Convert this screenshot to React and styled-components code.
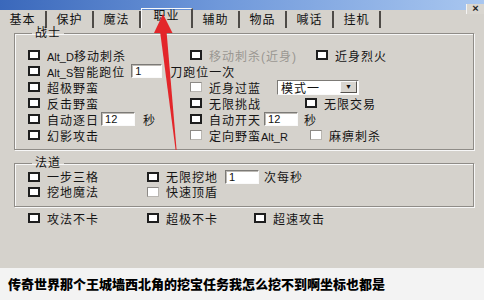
import React from 'react';
import styled, { createGlobalStyle } from 'styled-components';

const GlobalStyle = createGlobalStyle`
  html, body {
    margin: 0;
    padding: 0;
    width: 484px;
    height: 300px;
    overflow: hidden;
    background: #f4f4f4;
  }
`;

const Page = styled.div`
  position: relative;
  width: 484px;
  height: 300px;
  display: flex;
  flex-direction: column;
  font-family: "Liberation Sans", "Noto Sans CJK SC", sans-serif;
`;

const Window = styled.div`
  height: 268px;
  display: flex;
  flex-direction: column;
  background: #d5d2cc;
`;

const TitleBar = styled.div`
  height: 10px;
  display: flex;
  justify-content: flex-end;
  align-items: flex-end;
  background: linear-gradient(90deg, #3a68bb 0%, #6f98da 45%, #a9c7f0 100%);
`;

const CloseButton = styled.div`
  width: 17px;
  height: 10px;
  margin-bottom: -4px;
  background: #d9d6d0;
  border-left: 1px solid #f4f4f4;
  font: bold 11px/9px "Liberation Sans", sans-serif;
  color: #222;
  text-align: center;
`;

const TabStrip = styled.div`
  height: 18px;
  display: flex;
  align-items: flex-end;
`;

const Tab = styled.div`
  box-sizing: border-box;
  width: ${p => (p.$active ? 52 : 47)}px;
  height: ${p => (p.$active ? 20 : 17)}px;
  border-right: 2px solid #4e4b47;
  border-left: ${p => (p.$active ? '1px solid #fafafa' : 'none')};
  border-top: ${p => (p.$active ? '1px solid #fafafa' : 'none')};
  padding-top: ${p => (p.$active ? 0 : 2)}px;
  text-align: center;
  font-size: 12px;
  letter-spacing: 1px;
  line-height: 14px;
  color: #111;
`;

const Panel = styled.div`
  flex: 1;
  display: flex;
  flex-direction: column;
  padding: 0 10px 0 14px;
`;

const Group = styled.fieldset`
  margin: ${p => p.$top}px 0 0 0;
  padding: ${p => p.$pad};
  border: 1px solid #8f8c87;
  box-shadow: inset 1px 1px 0 #f7f7f7, 1px 1px 0 #f7f7f7;
  min-width: 0;
`;

const Legend = styled.legend`
  margin-left: 4px;
  padding: 0 3px;
  font-size: 12px;
  line-height: 10px;
  letter-spacing: 1px;
  color: #111;
`;

const Row = styled.div`
  height: ${p => p.$h || 16}px;
  display: flex;
  align-items: center;
  padding-left: ${p => p.$indent || 0}px;
  margin-top: ${p => p.$mt || 0}px;
`;

const Cell = styled.div`
  display: flex;
  align-items: center;
  flex: none;
  width: ${p => (p.$w ? `${p.$w}px` : 'auto')};
`;

const Check = styled.span`
  box-sizing: border-box;
  flex: none;
  width: 12px;
  height: 10px;
  margin-right: 7px;
  background: #fff;
  border: ${p => (p.$light ? '1px solid #b9b6b1' : '2px solid #1e1e1e')};
  border-top-color: ${p => (p.$light ? '#8d8a86' : '#1e1e1e')};
  border-left-color: ${p => (p.$light ? '#8d8a86' : '#1e1e1e')};
`;

const Label = styled.span`
  font-size: 12px;
  letter-spacing: 1px;
  white-space: nowrap;
  color: ${p => (p.$disabled ? '#9a9792' : '#151515')};
  margin-left: ${p => p.$ml || 0}px;
`;

const Lat = styled.span`
  font-size: 11px;
  letter-spacing: 0;
`;

const TextBox = styled.input`
  box-sizing: border-box;
  width: ${p => p.$w}px;
  height: 14px;
  margin-left: ${p => p.$ml || 0}px;
  padding: 0 3px;
  border: 1px solid;
  border-color: #7c7a76 #fafafa #fafafa #7c7a76;
  box-shadow: inset 1px 1px 0 #bdbab5;
  background: #fff;
  font: 11px "Liberation Sans", sans-serif;
  color: #111;
  outline: none;
`;

const Select = styled.div`
  box-sizing: border-box;
  width: 82px;
  height: 15px;
  margin-left: 16px;
  display: flex;
  align-items: center;
  justify-content: space-between;
  border: 1px solid;
  border-color: #7c7a76 #fafafa #fafafa #7c7a76;
  background: #fff;
  padding-left: 3px;
  font-size: 12px;
  letter-spacing: 1px;
  color: #111;
`;

const DropButton = styled.span`
  box-sizing: border-box;
  width: 17px;
  height: 12px;
  margin-right: 1px;
  background: #d8d5cf;
  border: 1px solid;
  border-color: #fafafa #55524e #55524e #fafafa;
  font-size: 7px;
  line-height: 10px;
  text-align: center;
  letter-spacing: 0;
`;

const Caption = styled.div`
  height: 32px;
  padding-left: 8px;
  background: #f3f3f3;
  font: 900 13px/32px "Noto Sans CJK SC", sans-serif;
  color: #000;
  white-space: nowrap;
`;

const ArrowLayer = styled.svg`
  position: absolute;
  left: 0;
  top: 0;
  pointer-events: none;
`;

const tabs = ['基本', '保护', '魔法', '职业', '辅助', '物品', '喊话', '挂机'];

export default function App() {
  return (
    <Page>
      <GlobalStyle />
      <Window>
        <TitleBar>
          <CloseButton>×</CloseButton>
        </TitleBar>
        <TabStrip>
          {tabs.map(t => (
            <Tab key={t} $active={t === '职业'}>{t}</Tab>
          ))}
        </TabStrip>
        <Panel>
          <Group $top={0} $pad="9px 0 6px 13px">
            <Legend>战士</Legend>
            <Row>
              <Cell $w={162}><Check /><Label><Lat>Alt_D</Lat>移动刺杀</Label></Cell>
              <Cell $w={126}><Check /><Label $disabled>移动刺杀(近身)</Label></Cell>
              <Cell><Check /><Label>近身烈火</Label></Cell>
            </Row>
            <Row>
              <Cell>
                <Check /><Label><Lat>Alt_S</Lat>智能跑位</Label>
                <TextBox $w={31} $ml={6} defaultValue="1" readOnly />
                <Label $ml={8}>刀跑位一次</Label>
              </Cell>
            </Row>
            <Row>
              <Cell $w={162}><Check /><Label>超极野蛮</Label></Cell>
              <Cell>
                <Check $light /><Label>近身过蓝</Label>
                <Select>模式一<DropButton>▼</DropButton></Select>
              </Cell>
            </Row>
            <Row>
              <Cell $w={162}><Check /><Label>反击野蛮</Label></Cell>
              <Cell $w={115}><Check /><Label>无限挑战</Label></Cell>
              <Cell><Check /><Label>无限交易</Label></Cell>
            </Row>
            <Row>
              <Cell $w={162}>
                <Check /><Label>自动逐日</Label>
                <TextBox $w={34} $ml={2} defaultValue="12" readOnly />
                <Label $ml={8}>秒</Label>
              </Cell>
              <Cell>
                <Check /><Label>自动开天</Label>
                <TextBox $w={34} $ml={3} defaultValue="12" readOnly />
                <Label $ml={6}>秒</Label>
              </Cell>
            </Row>
            <Row>
              <Cell $w={162}><Check /><Label>幻影攻击</Label></Cell>
              <Cell $w={120}><Check $light /><Label>定向野蛮<Lat>Alt_R</Lat></Label></Cell>
              <Cell><Check $light /><Label>麻痹刺杀</Label></Cell>
            </Row>
          </Group>

          <Group $top={8} $pad="1px 0 7px 13px">
            <Legend>法道</Legend>
            <Row $h={15}>
              <Cell $w={119}><Check /><Label>一步三格</Label></Cell>
              <Cell>
                <Check /><Label>无限挖地</Label>
                <TextBox $w={34} $ml={7} defaultValue="1" readOnly />
                <Label $ml={5}>次每秒</Label>
              </Cell>
            </Row>
            <Row $h={15}>
              <Cell $w={119}><Check /><Label>挖地魔法</Label></Cell>
              <Cell><Check $light /><Label>快速顶盾</Label></Cell>
            </Row>
          </Group>

          <Row $indent={14} $mt={3}>
            <Cell $w={119}><Check /><Label>攻法不卡</Label></Cell>
            <Cell $w={107}><Check /><Label>超极不卡</Label></Cell>
            <Cell><Check /><Label>超速攻击</Label></Cell>
          </Row>
        </Panel>
      </Window>
      <Caption>传奇世界那个王城墙西北角的挖宝任务我怎么挖不到啊坐标也都是</Caption>

      <ArrowLayer width="484" height="300" viewBox="0 0 484 300">
        <polygon points="160,31 166.5,31 176.6,150 175.6,150" fill="#e3262a" />
        <polygon points="163,14 172.5,33 154,33" fill="#e3262a" />
      </ArrowLayer>
    </Page>
  );
}
